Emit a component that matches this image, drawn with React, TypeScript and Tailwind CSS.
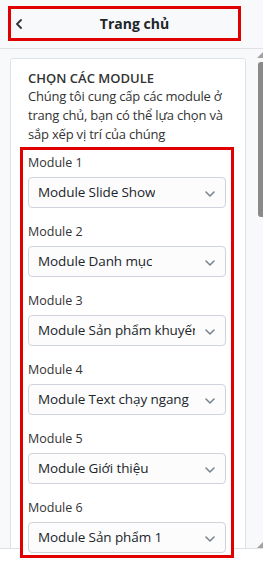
import React from "react";

const modules = [
  "Module Slide Show",
  "Module Danh mục",
  "Module Sản phẩm khuyến mãi",
  "Module Text chạy ngang",
  "Module Giới thiệu",
  "Module Sản phẩm 1",
];

function Chevron() {
  return (
    <svg width="10" height="6" viewBox="0 0 10 6" className="absolute right-[10px] top-[13px]">
      <polyline points="1,1 5,5 9,1" fill="none" stroke="#7a8590" strokeWidth="1.6" strokeLinecap="round" strokeLinejoin="round" />
    </svg>
  );
}

export default function App() {
  return (
    <div
      className="relative w-[263px] h-[562px] overflow-hidden bg-[#f8f9fa] flex flex-col text-[#212529]"
      style={{ fontFamily: '"Open Sans", "Noto Sans", sans-serif' }}
    >
      <header className="h-[49px] shrink-0 border-b border-[#dee2e6] pl-[8px] pr-[22px] pt-[6px]">
        <div className="h-[35px] border-[3px] border-[#e00000] flex items-center">
          <svg width="8" height="10" viewBox="0 0 8 10" className="ml-[4px] shrink-0">
            <polyline points="6,1 2,5 6,9" fill="none" stroke="#333" strokeWidth="1.8" strokeLinecap="round" strokeLinejoin="round" />
          </svg>
          <div className="flex-1 text-center pl-[8px] text-[14px] font-bold text-[#212529] leading-none">Trang chủ</div>
        </div>
      </header>
      <div className="flex flex-1 min-h-0 w-full">
        <div className="flex-1 min-w-0 pl-[10px] pr-[10px] pt-[9px]">
          <div className="bg-white border border-[#dee2e6] rounded-[3px] pl-[9px] pr-[11px] pt-[10px] h-[600px]">
            <div className="px-[8px]">
              <div className="text-[13px] font-semibold leading-[18px] text-[#333]">CHỌN CÁC MODULE</div>
              <div className="text-[13px] tracking-[-0.2px] leading-[19px] text-[#333]">
                Chúng tôi cung cấp các module ở trang chủ, bạn có thể lựa chọn và sắp xếp vị trí của chúng
              </div>
            </div>
            <div className="relative z-10 mt-[3px] border-[3px] border-[#e00000] bg-white px-[5px] pt-[3px] pb-[2px] flex flex-col">
              {modules.map((m, i) => (
                <div key={i} className={i === modules.length - 1 ? "" : "mb-[14px]"}>
                  <div className="text-[12.5px] leading-[20px] mb-[4px] text-[#333]">Module {i + 1}</div>
                  <div className="relative h-[31px] border border-[#ced4da] rounded-[4px] bg-[#fcfcfd] pl-[9px] pr-[30px] flex items-center overflow-hidden">
                    <span className="min-w-0 text-[13.5px] tracking-[-0.1px] whitespace-nowrap overflow-hidden text-[#212529]">{m}</span>
                    <Chevron />
                  </div>
                </div>
              ))}
            </div>
          </div>
        </div>
        <div className="w-[7px] shrink-0 flex flex-col items-center relative">
          <svg width="7" height="6" viewBox="0 0 7 6" className="mt-[3px]">
            <polygon points="7,0 7,6 1,6" fill="#a3a3a3" />
          </svg>
          <div className="mt-[4px] ml-[2px] w-[5px] h-[155px] rounded-l-[3px] bg-[#8a8a8a]" />
        </div>
      </div>
      <div className="absolute left-0 right-0 bottom-0 h-[14px] bg-white border-t border-[#dee2e6]">
        <svg width="7" height="6" viewBox="0 0 7 6" className="absolute right-0 -top-[7px]">
          <polygon points="7,0 7,6 1,6" fill="#a3a3a3" />
        </svg>
      </div>
    </div>
  );
}
